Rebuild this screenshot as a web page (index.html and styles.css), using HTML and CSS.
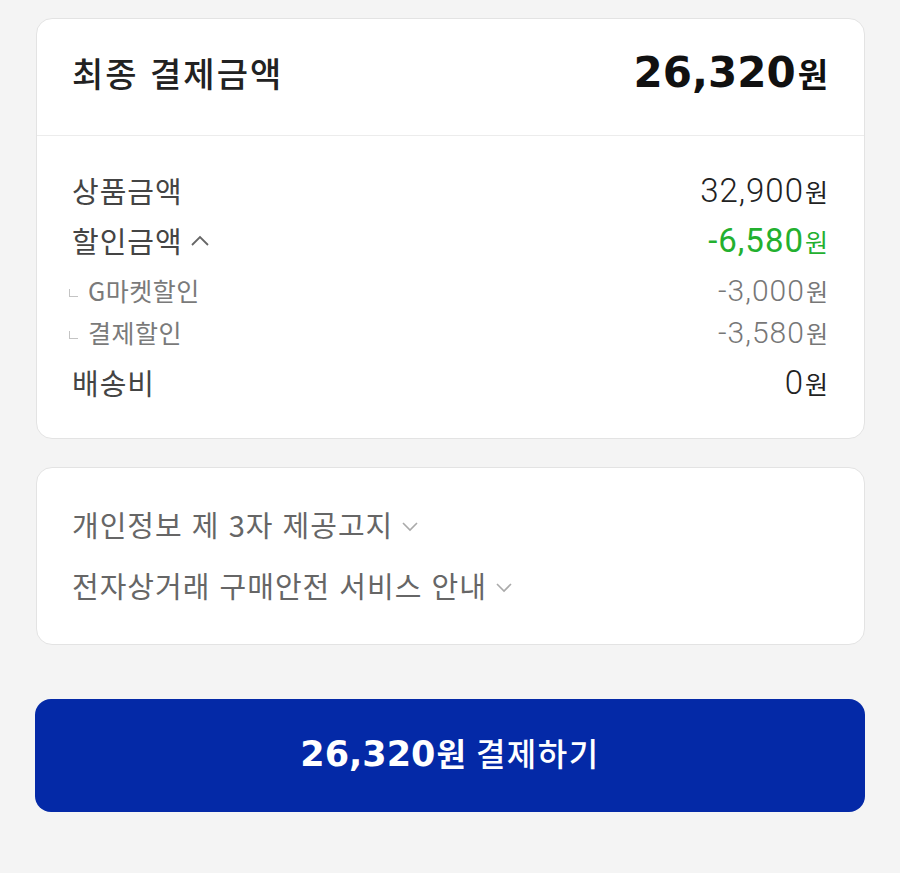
FILE: index.html
```html
<!DOCTYPE html>
<html lang="ko">
<head>
<meta charset="utf-8">
<link rel="stylesheet" href="styles.css">
</head>
<body>
<main class="page">
  <section class="card summary">
    <div class="summary-head">
      <h1 class="title">최종 결제금액</h1>
      <div class="total"><span class="total-num">26,320</span><span class="total-won">원</span></div>
    </div>
    <div class="summary-body">
      <div class="row">
        <span class="label">상품금액</span>
        <span class="value"><span class="num">32,900</span><span class="won">원</span></span>
      </div>
      <div class="row">
        <span class="label">할인금액
          <svg class="chev-up" width="22" height="14" viewBox="0 0 22 14"><path d="M3 11 L11 3 L19 11" fill="none" stroke="#666" stroke-width="1.8"/></svg>
        </span>
        <span class="value green"><span class="num">-6,580</span><span class="won">원</span></span>
      </div>
      <div class="sub-group">
        <div class="row sub">
          <span class="label"><span class="mark"></span>G마켓할인</span>
          <span class="value"><span class="num">-3,000</span><span class="won">원</span></span>
        </div>
        <div class="row sub">
          <span class="label"><span class="mark"></span>결제할인</span>
          <span class="value"><span class="num">-3,580</span><span class="won">원</span></span>
        </div>
      </div>
      <div class="row">
        <span class="label">배송비</span>
        <span class="value"><span class="num">0</span><span class="won">원</span></span>
      </div>
    </div>
  </section>

  <section class="card notices">
    <div class="notice">개인정보 제 3자 제공고지
      <svg class="chev-down" width="22" height="14" viewBox="0 0 22 14"><path d="M4 4 L11 11 L18 4" fill="none" stroke="#aaa" stroke-width="1.6"/></svg>
    </div>
    <div class="notice">전자상거래 구매안전 서비스 안내
      <svg class="chev-down" width="22" height="14" viewBox="0 0 22 14"><path d="M4 4 L11 11 L18 4" fill="none" stroke="#aaa" stroke-width="1.6"/></svg>
    </div>
  </section>

  <button class="pay-btn"><span class="btn-num">26,320</span><span class="btn-won">원</span><span class="btn-text">결제하기</span></button>
</main>
</body>
</html>
```

FILE: styles.css
```css
* { box-sizing: border-box; }
html, body { margin: 0; padding: 0; }
body {
  background: #f4f4f4;
  font-family: "Noto Sans CJK KR", "Noto Sans", sans-serif;
  color: #222;
}
.page {
  width: 900px;
  height: 873px;
  padding: 18px 35px 0 36px;
  display: flex;
  flex-direction: column;
}
.card {
  background: #fff;
  border: 1px solid #e3e3e3;
  border-radius: 16px;
}
.summary-head {
  height: 117px;
  padding: 0 36px 10px 35px;
  display: flex;
  align-items: center;
  justify-content: space-between;
  border-bottom: 1px solid #ececec;
}
.title {
  margin: 0;
  font-size: 34px;
  font-weight: 500;
  color: #222;
  letter-spacing: 2px;
}
.total {
  display: flex;
  align-items: baseline;
  color: #111;
}
.total-num {
  font-family: "DejaVu Sans", sans-serif;
  font-weight: 700;
  font-size: 42px;
}
.total-won {
  font-size: 33px;
  font-weight: 700;
  margin-left: 2px;
}
.summary-body {
  padding: 33px 36px 35px 35px;
  display: flex;
  flex-direction: column;
  gap: 8px;
}
.row {
  height: 42px;
  display: flex;
  align-items: center;
  justify-content: space-between;
}
.label {
  font-size: 29px;
  letter-spacing: 1px;
  color: #444;
  display: flex;
  align-items: center;
}
.chev-up { margin-left: 6px; margin-top: 2px; }
.value {
  display: flex;
  align-items: baseline;
  color: #222;
}
.num {
  font-family: Roboto, "Liberation Sans", sans-serif;
  font-weight: 300;
  font-size: 33px;
  letter-spacing: 1px;
}
.won {
  font-size: 25px;
  margin-left: 1px;
}
.green { color: #23b02f; }
.green .num { font-weight: 400; }
.sub .label {
  font-size: 25px;
  letter-spacing: 0.5px;
  color: #7a7a7a;
}
.sub .num {
  font-size: 30px;
  color: #777;
}
.sub .won { color: #777; font-size: 24px; }
.mark {
  width: 9px;
  height: 8px;
  border-left: 1.5px solid #c4c4c4;
  border-bottom: 1.5px solid #c4c4c4;
  margin: 6px 10px 0 -3px;
}
.notices {
  margin-top: 28px;
  padding: 35px 36px 38px 35px;
  display: flex;
  flex-direction: column;
  gap: 19px;
}
.notice {
  height: 42px;
  display: flex;
  align-items: center;
  font-size: 29px;
  letter-spacing: 1px;
  color: #666;
}
.chev-down { margin-left: 6px; margin-top: 4px; }
.pay-btn {
  margin-top: 54px;
  margin-left: -1px;
  height: 113px;
  border: none;
  border-radius: 16px;
  background: #0429a7;
  color: #fff;
  display: flex;
  align-items: baseline;
  justify-content: center;
  padding-top: 30px;
  font-family: "Noto Sans CJK KR", "Noto Sans", sans-serif;
}
.btn-num {
  font-family: "DejaVu Sans", sans-serif;
  font-weight: 700;
  font-size: 35px;
}
.btn-won {
  font-size: 32px;
  font-weight: 700;
  margin-left: 1px;
}
.btn-text {
  font-size: 32px;
  font-weight: 500;
  margin-left: 10px;
  letter-spacing: 1.5px;
}
```
